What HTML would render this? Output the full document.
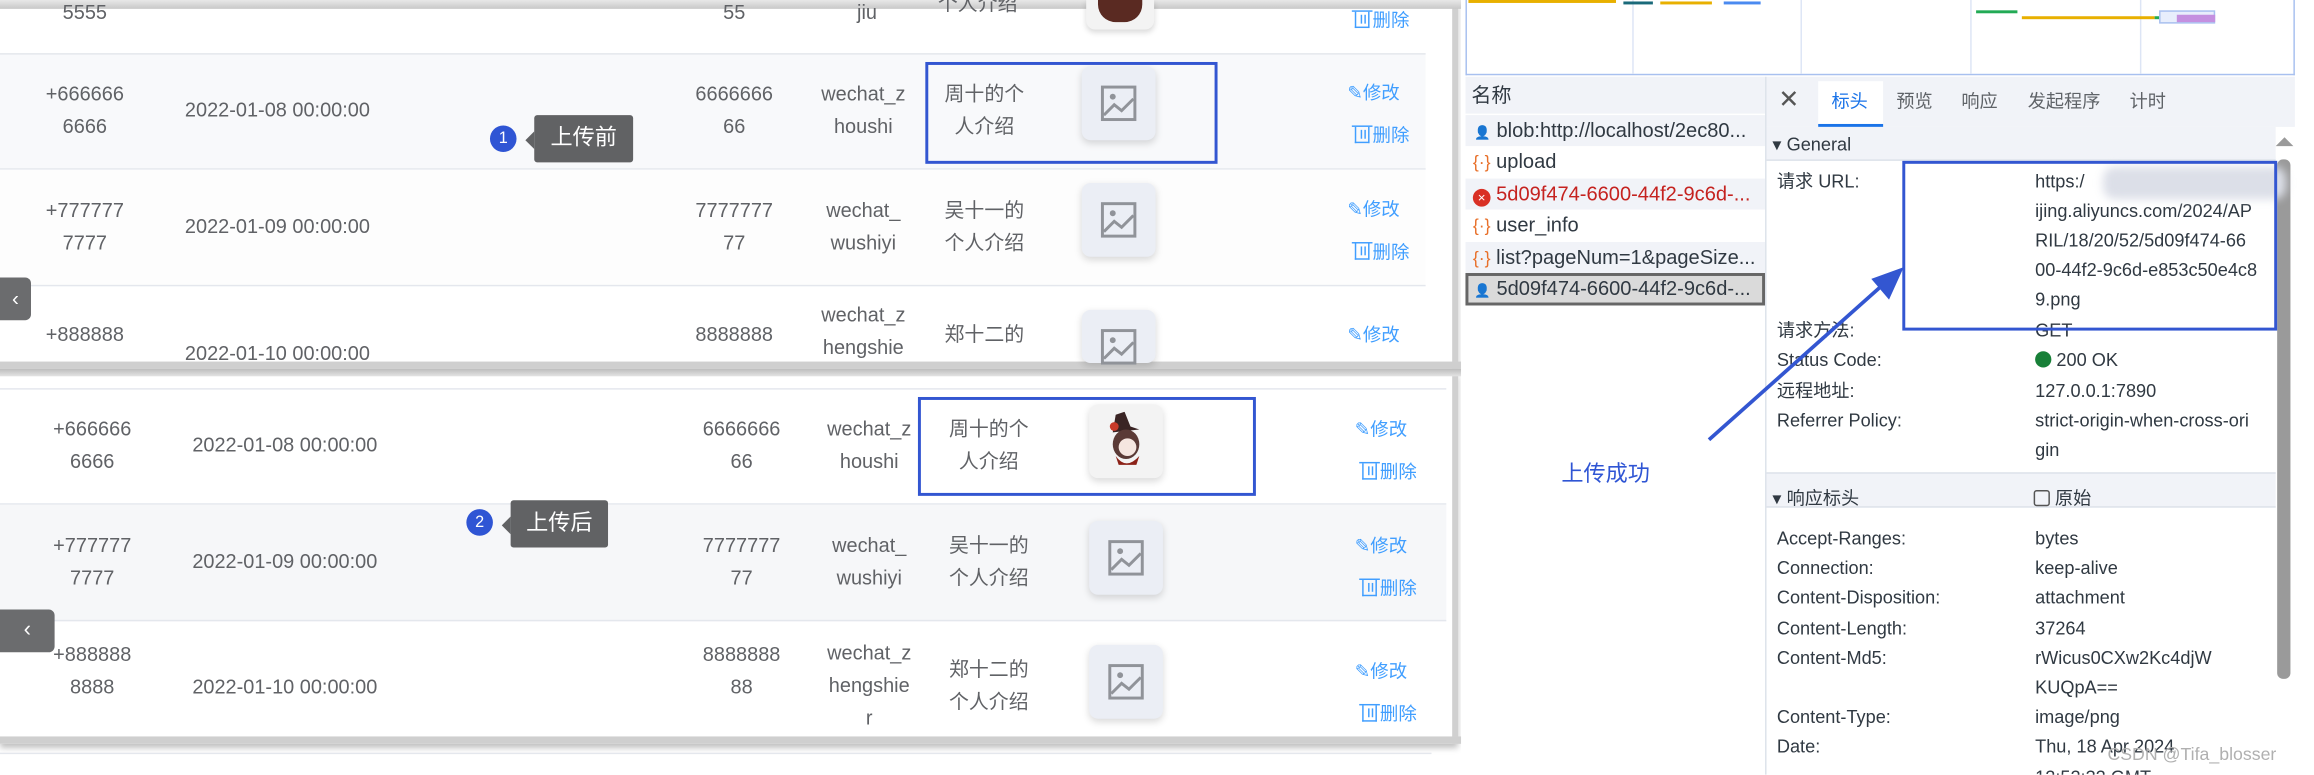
<!DOCTYPE html>
<html><head><meta charset="utf-8"><style>
*{margin:0;padding:0;box-sizing:border-box}
body{width:2314px;height:774px;overflow:hidden;background:#fff;font-family:"Liberation Sans","Noto Sans CJK SC",sans-serif}
#w{position:absolute;left:0;top:0;width:1568px;height:525px;transform:scale(1.4758);transform-origin:0 0;overflow:hidden}
.a{position:absolute}
.t{position:absolute;font-size:13.5px;color:#606266;line-height:22px;text-align:center;white-space:nowrap}
.img{position:absolute;width:50px;height:50px;background:#ebeef5;border-radius:6px;box-shadow:0 2px 5px rgba(0,0,0,.15)}
.img svg{position:absolute;left:12px;top:12px}
.act{position:absolute;font-size:12.5px;color:#409eff;white-space:nowrap}
.tr{display:inline-block;width:10px;height:11px;border:1.3px solid #409eff;border-top:none;margin-right:2px;vertical-align:-1px;position:relative}
.tr:before{content:"";position:absolute;left:-3px;top:-1px;width:14px;height:1.3px;background:#409eff}
.tr:after{content:"";position:absolute;left:3px;top:2px;width:1.2px;height:6px;background:#409eff;box-shadow:2.5px 0 0 #409eff}
.dv{position:absolute;font-size:12.3px;color:#303942;white-space:nowrap;line-height:20px}
.ls{font-size:13.6px}
.row{position:absolute;left:0;height:79px;border-bottom:1px solid #e4e7ed}
</style></head><body><div id="w">

<div class="a" style="left:0;top:0;width:988px;height:250px;background:#fff;border-right:4px solid #d0d0d0;box-shadow:0 3px 4px rgba(0,0,0,.25)"></div>
<div class="a" style="left:0;top:0;width:990px;height:6px;background:linear-gradient(#e8e8e8,#c8c8c8)"></div>
<div class="row" style="top:36px;width:966px;background:#f8f9fb;border-top:1px solid #e4e7ed"></div>
<div class="row" style="top:115px;width:966px;background:#fdfdfd"></div>
<div class="a" style="left:0;top:245px;width:990px;height:5px;background:#cfcfcf"></div>

<div class="t" style="left:20px;top:-2px;width:75px">5555</div>
<div class="t" style="left:470px;top:-2px;width:55px">55</div>
<div class="t" style="left:560px;top:-2px;width:55px">jiu</div>
<div class="t" style="left:630px;top:-8px;width:65px">个人介绍</div>
<div class="a" style="left:736px;top:0;width:46px;height:20px;background:#f3f3f3;border-radius:0 0 6px 6px;box-shadow:0 2px 4px rgba(0,0,0,.15)"><div style="margin:0 auto;width:30px;height:15px;background:#5a2a22;border-radius:0 0 12px 12px"></div></div>
<div class="act" style="left:918px;top:3px"><span class="tr"></span>删除</div>

<div class="t" style="left:20px;top:53px;width:75px">+666666<br>6666</div>
<div class="t" style="left:113px;top:64px;width:150px">2022-01-08 00:00:00</div>
<div class="t" style="left:470px;top:53px;width:55px">6666666<br>66</div>
<div class="t" style="left:555px;top:53px;width:60px">wechat_z<br>houshi</div>
<div class="t" style="left:633px;top:53px;width:68px">周十的个<br>人介绍</div>
<div class="img" style="left:733px;top:45px"><svg width="26" height="26" viewBox="0 0 26 26"><rect x="2" y="2" width="22" height="22" fill="none" stroke="#909399" stroke-width="2"/><circle cx="9" cy="8.5" r="2" fill="#909399"/><path d="M3 21 L10 14 L15 18 L23 10" fill="none" stroke="#909399" stroke-width="2"/></svg></div>
<div class="act" style="left:913px;top:52px">✎修改</div>
<div class="act" style="left:918px;top:81px"><span class="tr"></span>删除</div>

<div class="t" style="left:20px;top:132px;width:75px">+777777<br>7777</div>
<div class="t" style="left:113px;top:143px;width:150px">2022-01-09 00:00:00</div>
<div class="t" style="left:470px;top:132px;width:55px">7777777<br>77</div>
<div class="t" style="left:555px;top:132px;width:60px">wechat_<br>wushiyi</div>
<div class="t" style="left:633px;top:132px;width:68px">吴十一的<br>个人介绍</div>
<div class="img" style="left:733px;top:124px"><svg width="26" height="26" viewBox="0 0 26 26"><rect x="2" y="2" width="22" height="22" fill="none" stroke="#909399" stroke-width="2"/><circle cx="9" cy="8.5" r="2" fill="#909399"/><path d="M3 21 L10 14 L15 18 L23 10" fill="none" stroke="#909399" stroke-width="2"/></svg></div>
<div class="act" style="left:913px;top:131px">✎修改</div>
<div class="act" style="left:918px;top:160px"><span class="tr"></span>删除</div>

<div class="t" style="left:20px;top:216px;width:75px">+888888</div>
<div class="t" style="left:113px;top:229px;width:150px">2022-01-10 00:00:00</div>
<div class="t" style="left:470px;top:216px;width:55px">8888888</div>
<div class="t" style="left:555px;top:203px;width:60px">wechat_z<br>hengshie</div>
<div class="t" style="left:633px;top:216px;width:68px">郑十二的</div>
<div class="img" style="left:733px;top:210px;height:36px"><svg width="26" height="26" viewBox="0 0 26 26"><rect x="2" y="2" width="22" height="22" fill="none" stroke="#909399" stroke-width="2"/><circle cx="9" cy="8.5" r="2" fill="#909399"/><path d="M3 21 L10 14 L15 18 L23 10" fill="none" stroke="#909399" stroke-width="2"/></svg></div>
<div class="act" style="left:913px;top:216px">✎修改</div>
<div class="a" style="left:0;top:188px;width:21px;height:29px;background:#6b6c6e;border-radius:0 4px 4px 0;color:#fff;font-size:14px;text-align:center;line-height:28px">‹</div>

<div class="a" style="left:627px;top:42px;width:198px;height:69px;border:2px solid #3356d1"></div>
<div class="a" style="left:332px;top:85px;width:18px;height:18px;border-radius:50%;background:#2f55d4;color:#fff;font-size:11px;text-align:center;line-height:18px">1</div>
<div class="a" style="left:362px;top:78px;width:67px;height:32px;background:#616264;border-radius:2px;color:#fff;font-size:15px;text-align:center;line-height:32px">上传前</div>
<div class="a" style="left:356px;top:89px;border:6px solid transparent;border-right-color:#616264;border-left:0"></div>

<div class="a" style="left:0;top:252px;width:988px;height:252px;background:#fff;border-right:4px solid #d0d0d0;box-shadow:0 3px 4px rgba(0,0,0,.25)"></div>
<div class="a" style="left:0;top:250px;width:990px;height:5px;background:linear-gradient(#bdbdbd,#e3e3e3)"></div>
<div class="row" style="top:263px;width:980px;border-top:1px solid #e4e7ed"></div>
<div class="row" style="top:342px;width:980px;background:#f6f7f9"></div>
<div class="row" style="top:421px;width:980px;border-bottom:0;height:78px"></div>
<div class="a" style="left:0;top:499px;width:992px;height:5px;background:#cfcfcf"></div>
<div class="a" style="left:0;top:510px;width:970px;height:1px;background:#e4e7ed"></div>

<div class="t" style="left:25px;top:280px;width:75px">+666666<br>6666</div>
<div class="t" style="left:118px;top:291px;width:150px">2022-01-08 00:00:00</div>
<div class="t" style="left:475px;top:280px;width:55px">6666666<br>66</div>
<div class="t" style="left:559px;top:280px;width:60px">wechat_z<br>houshi</div>
<div class="t" style="left:636px;top:280px;width:68px">周十的个<br>人介绍</div>
<div class="img" style="left:738px;top:274px;background:#f3f3f3"><svg width="30" height="40" viewBox="0 0 30 40" style="left:10px;top:5px"><path d="M8 2 L14 0 L18 10 L24 12 L6 14 Z" fill="#3a2424"/><circle cx="7" cy="10" r="3" fill="#c83a2a"/><ellipse cx="15" cy="22" rx="9" ry="10" fill="#5a3a36"/><ellipse cx="16" cy="24" rx="6" ry="6" fill="#f5e6e0"/><path d="M8 30 Q15 40 24 30 L22 36 L10 36Z" fill="#8c2218"/></svg></div>
<div class="act" style="left:918px;top:280px">✎修改</div>
<div class="act" style="left:923px;top:309px"><span class="tr"></span>删除</div>

<div class="t" style="left:25px;top:359px;width:75px">+777777<br>7777</div>
<div class="t" style="left:118px;top:370px;width:150px">2022-01-09 00:00:00</div>
<div class="t" style="left:475px;top:359px;width:55px">7777777<br>77</div>
<div class="t" style="left:559px;top:359px;width:60px">wechat_<br>wushiyi</div>
<div class="t" style="left:636px;top:359px;width:68px">吴十一的<br>个人介绍</div>
<div class="img" style="left:738px;top:353px"><svg width="26" height="26" viewBox="0 0 26 26"><rect x="2" y="2" width="22" height="22" fill="none" stroke="#909399" stroke-width="2"/><circle cx="9" cy="8.5" r="2" fill="#909399"/><path d="M3 21 L10 14 L15 18 L23 10" fill="none" stroke="#909399" stroke-width="2"/></svg></div>
<div class="act" style="left:918px;top:359px">✎修改</div>
<div class="act" style="left:923px;top:388px"><span class="tr"></span>删除</div>

<div class="t" style="left:25px;top:433px;width:75px">+888888<br>8888</div>
<div class="t" style="left:118px;top:455px;width:150px">2022-01-10 00:00:00</div>
<div class="t" style="left:475px;top:433px;width:55px">8888888<br>88</div>
<div class="t" style="left:559px;top:432px;width:60px">wechat_z<br>hengshie<br>r</div>
<div class="t" style="left:636px;top:443px;width:68px">郑十二的<br>个人介绍</div>
<div class="img" style="left:738px;top:437px"><svg width="26" height="26" viewBox="0 0 26 26"><rect x="2" y="2" width="22" height="22" fill="none" stroke="#909399" stroke-width="2"/><circle cx="9" cy="8.5" r="2" fill="#909399"/><path d="M3 21 L10 14 L15 18 L23 10" fill="none" stroke="#909399" stroke-width="2"/></svg></div>
<div class="act" style="left:918px;top:444px">✎修改</div>
<div class="act" style="left:923px;top:473px"><span class="tr"></span>删除</div>
<div class="a" style="left:0;top:413px;width:37px;height:29px;background:#6b6c6e;border-radius:0 4px 4px 0;color:#fff;font-size:15px;text-align:center;line-height:28px">‹</div>

<div class="a" style="left:622px;top:269px;width:229px;height:67px;border:2px solid #3356d1"></div>
<div class="a" style="left:316px;top:345px;width:18px;height:18px;border-radius:50%;background:#2f55d4;color:#fff;font-size:11px;text-align:center;line-height:18px">2</div>
<div class="a" style="left:346px;top:339px;width:66px;height:32px;background:#616264;border-radius:2px;color:#fff;font-size:15px;text-align:center;line-height:32px">上传后</div>
<div class="a" style="left:340px;top:350px;border:6px solid transparent;border-right-color:#616264;border-left:0"></div>

<div class="a" style="left:990px;top:0;width:578px;height:525px;background:#fff"></div>
<div class="a" style="left:993px;top:0;width:562px;height:51px;border-left:1px solid #a8c0ef;border-right:1px solid #a8c0ef;border-bottom:1px solid #a8c0ef"></div>
<div class="a" style="left:1106px;top:0;width:1px;height:50px;background:#dde5f5"></div>
<div class="a" style="left:1220px;top:0;width:1px;height:50px;background:#dde5f5"></div>
<div class="a" style="left:1335px;top:0;width:1px;height:50px;background:#dde5f5"></div>
<div class="a" style="left:1450px;top:0;width:1px;height:50px;background:#dde5f5"></div>
<div class="a" style="left:995px;top:0;width:100px;height:2px;background:#e8b000"></div>
<div class="a" style="left:1100px;top:1px;width:20px;height:2px;background:#1a6a7a"></div>
<div class="a" style="left:1125px;top:1px;width:35px;height:2px;background:#e8b000"></div>
<div class="a" style="left:1168px;top:1px;width:25px;height:2px;background:#4a8af0"></div>
<div class="a" style="left:1339px;top:7px;width:28px;height:2px;background:#22aa55"></div>
<div class="a" style="left:1370px;top:11px;width:90px;height:2px;background:#e8b000"></div>
<div class="a" style="left:1460px;top:11px;width:28px;height:2px;background:#22aa55"></div>
<div class="a" style="left:1463px;top:7px;width:38px;height:9px;background:#e8eefc;border:1px solid #a8c0ef"></div>
<div class="a" style="left:1475px;top:10px;width:26px;height:5px;background:#c490e0"></div>

<div class="a" style="left:993px;top:52px;width:203px;height:25px;background:#f1f3f8"></div>
<div class="dv ls" style="left:997px;top:55px">名称</div>
<div class="a" style="left:993px;top:78px;width:203px;height:21px;background:#f1f3f8"></div>
<div class="a" style="left:993px;top:121px;width:203px;height:21px;background:#f1f3f8"></div>
<div class="a" style="left:993px;top:164px;width:203px;height:21px;background:#f1f3f8"></div>
<div class="a" style="left:993px;top:185px;width:203px;height:22px;background:#dadada;border:2px solid #666"></div>
<div class="dv ls" style="left:999px;top:79px"><span style="font-size:9px">👤</span> blob:http://localhost/2ec80...</div>
<div class="dv ls" style="left:998px;top:100px"><span style="color:#e8702a;font-size:12px">{·}</span> upload</div>
<div class="dv ls" style="left:998px;top:122px;color:#c5221f"><span style="display:inline-block;width:12px;height:12px;border-radius:50%;background:#d93025;color:#fff;font-size:9px;text-align:center;line-height:12px;vertical-align:-1px">×</span> 5d09f474-6600-44f2-9c6d-...</div>
<div class="dv ls" style="left:998px;top:143px"><span style="color:#e8702a;font-size:12px">{·}</span> user_info</div>
<div class="dv ls" style="left:998px;top:165px"><span style="color:#e8702a;font-size:12px">{·}</span> list?pageNum=1&amp;pageSize...</div>
<div class="dv ls" style="left:999px;top:186px"><span style="font-size:9px">👤</span> 5d09f474-6600-44f2-9c6d-...</div>
<div class="a" style="left:1196px;top:52px;width:1px;height:473px;background:#dde2ea"></div>

<div class="a" style="left:1197px;top:52px;width:358px;height:34px;background:#f1f3f8"></div>
<div class="dv" style="left:1205px;top:58px;font-size:17px;color:#555">✕</div>
<div class="a" style="left:1232px;top:55px;width:44px;height:31px;background:#fff;border-bottom:2px solid #1a73e8"></div>
<div class="dv" style="left:1241px;top:59px;color:#1a73e8">标头</div>
<div class="dv" style="left:1285px;top:59px;color:#5f6368">预览</div>
<div class="dv" style="left:1329px;top:59px;color:#5f6368">响应</div>
<div class="dv" style="left:1374px;top:59px;color:#5f6368">发起程序</div>
<div class="dv" style="left:1443px;top:59px;color:#5f6368">计时</div>
<div class="a" style="left:1197px;top:86px;width:345px;height:23px;background:#f1f3f8;border-bottom:1px solid #dde2ea"></div>
<div class="dv" style="left:1201px;top:88px">▾ General</div>
<div class="a" style="left:1543px;top:108px;width:9px;height:352px;background:#9a9a9a;border-radius:4px"></div>
<div class="a" style="left:1542px;top:93px;border:6px solid transparent;border-bottom-color:#9a9a9a;border-top:0"></div>

<div class="dv" style="left:1204px;top:113px">请求 URL:</div>
<div class="dv" style="left:1379px;top:113px">https:/<br>ijing.aliyuncs.com/2024/AP<br>RIL/18/20/52/5d09f474-66<br>00-44f2-9c6d-e853c50e4c8<br>9.png</div>
<div class="a" style="left:1425px;top:113px;width:124px;height:22px;background:#dcdfe8;border-radius:8px;filter:blur(3px)"></div>
<div class="dv" style="left:1204px;top:214px">请求方法:</div><div class="dv" style="left:1379px;top:214px">GET</div>
<div class="dv" style="left:1204px;top:234px">Status Code:</div><div class="dv" style="left:1379px;top:234px"><span style="display:inline-block;width:11px;height:11px;border-radius:50%;background:#188038;vertical-align:-1px"></span> 200 OK</div>
<div class="dv" style="left:1204px;top:255px">远程地址:</div><div class="dv" style="left:1379px;top:255px">127.0.0.1:7890</div>
<div class="dv" style="left:1204px;top:275px">Referrer Policy:</div><div class="dv" style="left:1379px;top:275px">strict-origin-when-cross-ori<br>gin</div>
<div class="a" style="left:1197px;top:320px;width:345px;height:24px;background:#f1f3f8;border-top:1px solid #dde2ea;border-bottom:1px solid #dde2ea"></div>
<div class="dv" style="left:1201px;top:328px">▾ 响应标头</div>
<div class="dv" style="left:1378px;top:328px"><span style="display:inline-block;width:11px;height:11px;border:1px solid #555;border-radius:2px;vertical-align:-1px"></span> 原始</div>
<div class="dv" style="left:1204px;top:355px;line-height:20.2px">Accept-Ranges:<br>Connection:<br>Content-Disposition:<br>Content-Length:<br>Content-Md5:<br><br>Content-Type:<br>Date:</div>
<div class="dv" style="left:1379px;top:355px;line-height:20.2px">bytes<br>keep-alive<br>attachment<br>37264<br>rWicus0CXw2Kc4djW<br>KUQpA==<br>image/png<br>Thu, 18 Apr 2024<br>12:52:32 GMT</div>
<div class="dv" style="left:1428px;top:501px;color:#b0b0b0;font-size:12px">CSDN @Tifa_blosser</div>

<div class="a" style="left:1289px;top:109px;width:254px;height:115px;border:2px solid #3356d1"></div>
<svg class="a" style="left:1150px;top:175px" width="150" height="130"><path d="M8 123 L128 16" stroke="#3356d1" stroke-width="2.5"/><path d="M140 6 L118 14 L130 28 Z" fill="#3356d1"/></svg>
<div class="a" style="left:1058px;top:310px;font-size:15px;color:#2f55d4">上传成功</div>
</div></body></html>
